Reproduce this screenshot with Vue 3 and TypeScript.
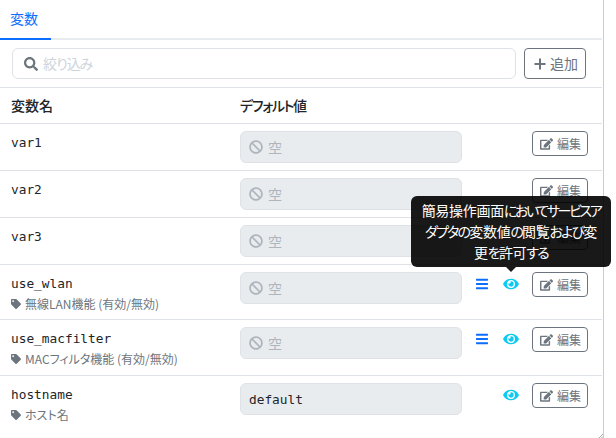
<script setup lang="ts">
interface Row {
  name: string
  desc?: string
  value?: string
  bars?: boolean
  eye?: boolean
  kind: 'plain' | 'sub'
}
const rows: Row[] = [
  { name: 'var1', kind: 'plain' },
  { name: 'var2', kind: 'plain' },
  { name: 'var3', kind: 'plain' },
  { name: 'use_wlan', desc: '無線LAN機能 (有効/無効)', bars: true, eye: true, kind: 'sub' },
  { name: 'use_macfilter', desc: 'MACフィルタ機能 (有効/無効)', bars: true, eye: true, kind: 'sub' },
  { name: 'hostname', desc: 'ホスト名', value: 'default', eye: true, kind: 'sub' }
]
const editPath = 'M402.6 83.2l90.2 90.2c3.8 3.8 3.8 10 0 13.8L274.4 405.6l-92.8 10.3c-12.4 1.4-22.9-9.1-21.5-21.5l10.3-92.8L388.8 83.2c3.8-3.8 10-3.8 13.8 0zm162-22.9l-48.8-48.8c-15.2-15.2-39.9-15.2-55.2 0l-35.4 35.4c-3.8 3.8-3.8 10 0 13.8l90.2 90.2c3.8 3.8 10 3.8 13.8 0l35.4-35.4c15.2-15.3 15.2-40 0-55.2zM384 346.2V448H64V128h229.8c3.2 0 6.2-1.3 8.5-3.5l40-40c7.6-7.6 2.2-20.5-8.5-20.5H48C21.5 64 0 85.5 0 112v352c0 26.5 21.5 48 48 48h352c26.5 0 48-21.5 48-48V306.2c0-10.7-12.9-16-20.5-8.5l-40 40c-2.2 2.3-3.5 5.3-3.5 8.5z'
const tagPath = 'M0 252.118V48C0 21.49 21.49 0 48 0h204.118a48 48 0 0 1 33.941 14.059l211.882 211.882c18.745 18.745 18.745 49.137 0 67.882L293.823 497.941c-18.745 18.745-49.137 18.745-67.882 0L14.059 286.059A48 48 0 0 1 0 252.118zM112 64c-26.51 0-48 21.49-48 48s21.49 48 48 48 48-21.49 48-48-21.49-48-48-48z'
const eyePath = 'M572.52 241.4C518.29 135.59 410.93 64 288 64S57.68 135.64 3.48 241.41a32.35 32.35 0 0 0 0 29.19C57.71 376.41 165.07 448 288 448s230.32-71.64 284.52-177.41a32.35 32.35 0 0 0 0-29.19zM288 400a144 144 0 1 1 144-144 143.93 143.93 0 0 1-144 144zm0-240a95.31 95.31 0 0 0-25.31 3.79 47.85 47.85 0 0 1-66.9 66.9A95.78 95.78 0 1 0 288 160z'
const banPath = 'M256 8C119.034 8 8 119.033 8 256s111.034 248 248 248 248-111.034 248-248S392.967 8 256 8zm130.108 117.892c65.448 65.448 70 165.481 20.677 235.637L150.47 105.216c70.204-49.356 170.226-44.735 235.638 20.676zM125.892 386.108c-65.448-65.448-70-165.481-20.677-235.637L361.53 406.784c-70.203 49.356-170.226 44.736-235.638-20.676z'
const barsPath = 'M16 132h416c8.837 0 16-7.163 16-16V76c0-8.837-7.163-16-16-16H16C7.163 60 0 67.163 0 76v40c0 8.837 7.163 16 16 16zm0 160h416c8.837 0 16-7.163 16-16v-40c0-8.837-7.163-16-16-16H16c-8.837 0-16 7.163-16 16v40c0 8.837 7.163 16 16 16zm0 160h416c8.837 0 16-7.163 16-16v-40c0-8.837-7.163-16-16-16H16c-8.837 0-16 7.163-16 16v40c0 8.837 7.163 16 16 16z'
const searchPath = 'M505 442.7L405.3 343c-4.5-4.5-10.6-7-17-7H372c27.6-35.3 44-79.7 44-128C416 93.1 322.9 0 208 0S0 93.1 0 208s93.1 208 208 208c48.3 0 92.7-16.4 128-44v16.3c0 6.4 2.5 12.5 7 17l99.7 99.7c9.4 9.4 24.6 9.4 33.9 0l28.3-28.3c9.4-9.4 9.4-24.6.1-34zM208 336c-70.7 0-128-57.2-128-128 0-70.7 57.2-128 128-128 70.7 0 128 57.2 128 128 0 70.7-57.2 128-128 128z'
</script>

<template>
  <div class="page">
    <div class="panel">
      <div class="tabs"><span class="tab">変数</span></div>
      <div class="toolbar">
        <div class="search">
          <svg class="search-icon" viewBox="0 0 512 512"><path :d="searchPath" /></svg>
          <span class="placeholder">絞り込み</span>
        </div>
        <button class="add" type="button">
          <svg class="plus" viewBox="0 0 12 12"><path d="M6 .5v11M.5 6h11" /></svg>
          <span>追加</span>
        </button>
      </div>
      <div class="head">
        <span class="col-name">変数名</span>
        <span class="default-head">デフォルト値</span>
      </div>
      <div v-for="row in rows" :key="row.name" class="row" :class="row.kind">
        <div class="col-name">
          <div class="var">{{ row.name }}</div>
          <div v-if="row.desc" class="desc">
            <svg class="tag" viewBox="0 0 512 512"><path :d="tagPath" /></svg>
            <span>{{ row.desc }}</span>
          </div>
        </div>
        <div class="value">
          <template v-if="row.value">{{ row.value }}</template>
          <span v-else class="empty">
            <svg class="ban" viewBox="0 0 512 512"><path :d="banPath" /></svg>
            <span>空</span>
          </span>
        </div>
        <div class="controls">
          <div class="slot bars">
            <svg v-if="row.bars" viewBox="0 0 448 512"><path :d="barsPath" /></svg>
          </div>
          <div class="slot eye">
            <svg v-if="row.eye" viewBox="0 0 576 512"><path :d="eyePath" /></svg>
          </div>
          <button class="edit" type="button">
            <svg viewBox="0 0 576 512"><path :d="editPath" /></svg>
            <span>編集</span>
          </button>
        </div>
      </div>
    </div>
    <div class="tooltip">
      簡易操作画面<span class="kana">においてサービスア</span><br /><span class="k2">ダプタの</span>変数値<span class="k2">の</span>閲覧<span class="k2">および</span>変<br />更<span class="k2">を</span>許可<span class="k2">する</span>
      <i class="arrow"></i>
    </div>
    <svg class="grip" viewBox="0 0 4 4"><path d="M0 4L4 0M2.5 4L4 2.5" /></svg>
  </div>
</template>

<style>
html, body { margin: 0; background: #fff; overflow: hidden; }
</style>

<style scoped>
.page {
  position: relative;
  width: 616px;
  height: 438px;
  overflow: hidden;
  background: #fff;
  color: #212529;
  font: 14px/21px "Noto Sans CJK JP", "Noto Sans", sans-serif;
  font-feature-settings: "palt";
}
.panel {
  box-sizing: border-box;
  width: 604px;
  height: 438px;
  padding-right: 1px;
  border-right: 1px solid #ccc;
}
.tabs {
  display: flex;
  height: 38px;
  border-bottom: 2px solid #e9ecef;
}
.tab {
  box-sizing: content-box;
  width: 31px;
  height: 38px;
  padding: 0 10px;
  margin-bottom: -2px;
  border-bottom: 2px solid #0d6efd;
  color: #0d6efd;
  line-height: 37px;
}
.toolbar {
  display: flex;
  gap: 8px;
  height: 31px;
  padding: 8px 16px 8px 12px;
  border-bottom: 1px solid #dee2e6;
}
.search {
  box-sizing: border-box;
  display: flex;
  align-items: center;
  gap: 5px;
  width: 504px;
  padding-left: 11px;
  border: 1px solid #dee2e6;
  border-radius: 6px;
}
.search-icon { width: 14px; height: 14px; fill: #6c757d; }
.placeholder { color: #ced4da; letter-spacing: -1px; }
.add {
  box-sizing: border-box;
  display: flex;
  align-items: center;
  gap: 4px;
  width: 62px;
  padding: 0 0 0 9px;
  border: 1px solid #6c757d;
  border-radius: 4px;
  background: #fff;
  color: #6c757d;
  font: inherit;
}
.plus { width: 12px; height: 12px; fill: none; stroke: #6c757d; stroke-width: 2; }
.head {
  display: flex;
  align-items: center;
  height: 35px;
  padding-left: 11px;
  border-bottom: 1px solid #dee2e6;
  font-weight: 500;
}
.default-head { letter-spacing: -1.3px; }
.col-name { flex: 0 0 229px; }
.row {
  box-sizing: border-box;
  display: flex;
  align-items: flex-start;
  padding: 7px 0 0 11px;
  border-bottom: 1px solid #dee2e6;
}
.row.plain { height: 47px; }
.row.sub { height: 55px; }
.row.sub + .row.sub { height: 56px; }
.row:last-child { border-bottom: 0; }
.var {
  font: 12.8px/21px "DejaVu Sans Mono", monospace;
  color: #212529;
  margin-top: 1px;
}
.desc {
  display: flex;
  align-items: center;
  gap: 4px;
  margin-top: -1px;
  font-size: 12px;
  line-height: 21px;
  color: #6c757d;
}
.tag { width: 10px; height: 10px; fill: #6c757d; }
.value {
  box-sizing: border-box;
  display: flex;
  align-items: center;
  flex: 0 0 222px;
  height: 32px;
  padding-left: 8px;
  border: 1px solid #dee2e6;
  border-radius: 6px;
  background: #e9ecef;
  font: 12.8px/21px "DejaVu Sans Mono", monospace;
  color: #212529;
}
.empty {
  display: flex;
  align-items: center;
  gap: 5px;
  font: 14px/21px "Noto Sans CJK JP", sans-serif;
  color: #adb5bd;
}
.ban { width: 14px; height: 14px; fill: #adb5bd; }
.controls {
  display: flex;
  align-items: flex-start;
  padding-left: 14px;
}
.slot { display: flex; padding-top: 5px; }
.bars { width: 27px; }
.bars svg { width: 12px; height: 14px; fill: #0d6efd; }
.eye { width: 29px; }
.eye svg { width: 16px; height: 14px; fill: #0dcaf0; }
.edit {
  box-sizing: border-box;
  display: flex;
  align-items: center;
  gap: 4px;
  width: 56px;
  height: 25px;
  padding: 0 0 0 7px;
  border: 1px solid #6c757d;
  border-radius: 4px;
  background: #fff;
  color: #6c757d;
  font: inherit;
  font-size: 12px;
}
.edit svg { width: 13px; height: 12px; fill: #6c757d; }
.tooltip {
  position: absolute;
  left: 411px;
  top: 196px;
  box-sizing: border-box;
  width: 200px;
  height: 71px;
  padding: 4px 8px;
  border-radius: 6px;
  background: rgba(0, 0, 0, 0.9);
  color: #fff;
  text-align: center;
  white-space: nowrap;
  letter-spacing: -0.3px;
}
.kana { letter-spacing: -2.4px; }
.k2 { letter-spacing: -1.8px; }
.arrow {
  position: absolute;
  left: 95px;
  top: 71px;
  width: 0;
  height: 0;
  border-style: solid;
  border-width: 5px 5px 0;
  border-color: rgba(0, 0, 0, 0.9) transparent transparent;
}
.grip {
  position: absolute;
  left: 599px;
  top: 434px;
  width: 4px;
  height: 4px;
  fill: none;
  stroke: #888;
  stroke-width: 0.7;
}
</style>
